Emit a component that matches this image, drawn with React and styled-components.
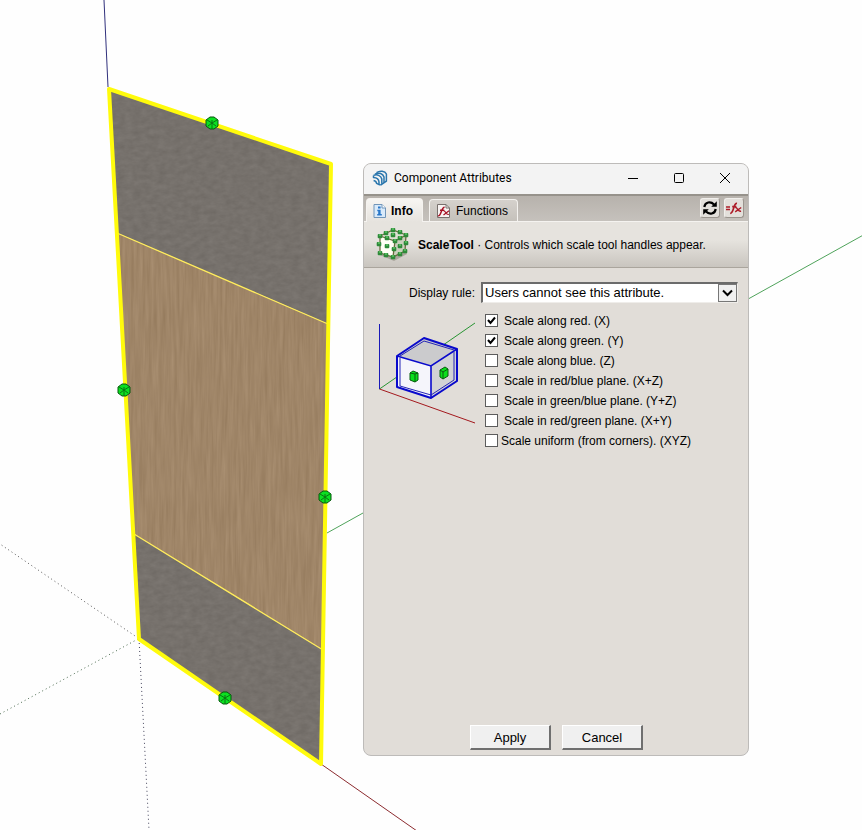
import React, { useState } from "react";
import styled, { createGlobalStyle } from "styled-components";

const GlobalStyle = createGlobalStyle`
    * {
        box-sizing: border-box;
    }

    body {
        margin: 0;
        background: #fefefe;
        color: #000;
        font-family: "Liberation Sans", Arial, sans-serif;
        font-size: 12px;
    }
`

const Desktop = styled.main`
    position: relative;
    display: flex;
    min-height: 100vh;
    padding: 163px 113px 74px 363px;
    overflow: hidden;
`

const Scene = styled.svg`
    position: absolute;
    inset: 0;
    width: 100%;
    height: 100%;
`

const Dialog = styled.section`
    position: relative;
    flex: 1;
    display: flex;
    flex-direction: column;
    min-width: 0;
    border: 1px solid #bdbbb9;
    border-radius: 8px;
    overflow: hidden;
    background: #e1ddd8;
`

const TitleBar = styled.header`
    display: flex;
    align-items: center;
    height: 30px;
    padding: 0 8px 2px;
    gap: 6px;
    background: #f3f3f3;

    h1 {
        flex: 1;
        margin: 0;
        font: 400 12px/16px Roboto, "Open Sans", sans-serif;
    }
`

const WindowButtons = styled.div`
    display: flex;
    gap: 30px;
    padding-right: 7px;
`

const WindowButton = styled.button`
    display: flex;
    width: 16px;
    height: 16px;
    padding: 0;
    border: none;
    background: none;
`

const TabBar = styled.nav`
    display: flex;
    align-items: flex-end;
    height: 28px;
    padding: 0 4px 0 2px;
    border-top: 2px solid #96928b;
    background: linear-gradient(#b7b2ac, #c6c2bd);
    box-shadow: inset 0 -1px 0 #f5f3f0;
`

const Tab = styled.button`
    display: flex;
    align-items: center;
    gap: 5px;
    height: ${(props) => (props.$active ? "24px" : "23px")};
    margin-right: 6px;
    padding: 0 9px 0 6px;
    border: 1px solid #f4f2ef;
    border-bottom: ${(props) => (props.$active ? "none" : "1px solid #f5f3f0")};
    border-radius: 4px 4px 0 0;
    background: ${(props) => (props.$active ? "linear-gradient(#f7f5f2, #e6e3de)" : "linear-gradient(#d5d1cc, #c5c1bb)")};
    color: #000;
    font: ${(props) => (props.$active ? "700" : "400")} 12px/14px "Liberation Sans", Arial, sans-serif;
`

const Tools = styled.div`
    display: flex;
    gap: 4px;
    margin-left: auto;
    padding-bottom: 4px;
`

const ToolButton = styled.button`
    display: flex;
    align-items: center;
    justify-content: center;
    width: 20px;
    height: 20px;
    padding: 0;
    border: 1px solid #f1efec;
    border-right-color: #9a958e;
    border-bottom-color: #9a958e;
    border-radius: 3px;
    background: #e3e0db;
`

const Banner = styled.div`
    display: flex;
    align-items: center;
    gap: 8px;
    height: 46px;
    padding: 0 10px 0 12px;
    border-bottom: 1px solid #aaa59d;
    background: linear-gradient(#e6e3de 40%, #c9c5bf);

    p {
        margin: 0;
        white-space: nowrap;
        line-height: 16px;
    }
`

const Form = styled.form`
    flex: 1;
    display: flex;
    flex-direction: column;
    padding: 14px 10px 5px 15px;
`

const RuleRow = styled.div`
    display: flex;
    align-items: center;
    gap: 6px;

    label {
        width: 96px;
        text-align: right;
    }
`

const SelectBox = styled.div`
    flex: 1;
    display: grid;
    border-top: 2px solid #6b6b6b;
    border-left: 2px solid #6b6b6b;
    border-bottom: 1px solid #efedea;
    border-right: 1px solid #efedea;
    background: #fff;

    select,
    svg {
        grid-area: 1 / 1;
    }

    select {
        appearance: none;
        width: 100%;
        height: 18px;
        padding: 0 20px 0 2px;
        border: none;
        border-radius: 0;
        background: none;
        color: #000;
        font: 13px/18px "Liberation Sans", Arial, sans-serif;
    }

    svg {
        justify-self: end;
        pointer-events: none;
    }
`

const Options = styled.div`
    display: flex;
    align-items: flex-start;
    gap: 10px;
    margin-top: 8px;

    > svg {
        margin: 8px 0 0;
    }
`

const OptionList = styled.ul`
    display: flex;
    flex-direction: column;
    margin: 0;
    padding: 0;
    list-style: none;
`

const Option = styled.label`
    display: flex;
    align-items: center;
    gap: ${(props) => (props.$tight ? "3px" : "6px")};
    height: 20px;
    line-height: 20px;
    white-space: nowrap;
`

const Tick = styled.span`
    display: grid;
    margin-bottom: 2px;

    input,
    svg {
        grid-area: 1 / 1;
        width: 13px;
        height: 13px;
        margin: 0;
    }

    input {
        appearance: none;
        border: 1px solid #5c5c5c;
        background: #fff;
    }

    svg {
        visibility: hidden;
        pointer-events: none;
    }

    input:checked + svg {
        visibility: visible;
    }
`

const Footer = styled.footer`
    display: flex;
    justify-content: center;
    gap: 11px;
    margin-top: auto;
    padding-right: 4px;
`

const PushButton = styled.button`
    width: 81px;
    height: 25px;
    padding: 1px 0 0;
    border: 1px solid #fff;
    border-right: 2px solid #6f6f6f;
    border-bottom: 2px solid #6f6f6f;
    background: #f0f0f0;
    color: #000;
    font: 13px/16px "Liberation Sans", Arial, sans-serif;
`

const handles = [
    [212, 123],
    [124, 390],
    [325, 497],
    [225, 698],
]

const options = [
    { id: "x", text: "Scale along red. (X)", on: true },
    { id: "y", text: "Scale along green. (Y)", on: true },
    { id: "z", text: "Scale along blue. (Z)" },
    { id: "xz", text: "Scale in red/blue plane. (X+Z)" },
    { id: "yz", text: "Scale in green/blue plane. (Y+Z)" },
    { id: "xy", text: "Scale in red/green plane. (X+Y)" },
    { id: "xyz", text: "Scale uniform (from corners). (XYZ)", tight: true },
]

function Handle({ x, y }) {
    return (
        <g transform={`translate(${x} ${y})`}>
            <path d="M-6 -3L-2 -6H2L6 -3V3L2 6H-2L-6 3Z" fill="#0be021" stroke="#06570c" strokeLinejoin="round" />
            <path d="M-5 -3L0 0L5 -3M0 0V6M-4 3L0 0L4 3M0 -3V0" fill="none" stroke="#087512" />
        </g>
    )
}

function Model() {
    return (
        <Scene aria-hidden="true">
            <defs>
                <filter id="stone" x="0" y="0" width="100%" height="100%" colorInterpolationFilters="sRGB">
                    <feTurbulence type="fractalNoise" baseFrequency="0.12 0.2" numOctaves="3" seed="4" />
                    <feColorMatrix values="0.07 0 0 0 0.428  0.07 0 0 0 0.408  0.07 0 0 0 0.388  0 0 0 0 1" />
                    <feComposite in2="SourceGraphic" operator="in" />
                </filter>
                <filter id="wood" x="0" y="0" width="100%" height="100%" colorInterpolationFilters="sRGB">
                    <feTurbulence type="fractalNoise" baseFrequency="0.35 0.02" numOctaves="3" seed="8" />
                    <feColorMatrix values="0.09 0 0 0 0.58  0.09 0 0 0 0.478  0.09 0 0 0 0.362  0 0 0 0 1" />
                    <feComposite in2="SourceGraphic" operator="in" />
                </filter>
            </defs>
            <path d="M104 0L108 87" stroke="#30307c" />
            <path d="M327 533L1398 -62" stroke="#4fa35b" />
            <path d="M321 764L609 965" stroke="#8c2b2f" />
            <path d="M138 638L0 544" stroke="#555" strokeDasharray="1 3" />
            <path d="M138 639L0 714" stroke="#4b6b4f" strokeDasharray="1 3" />
            <path d="M139 639L149 830" stroke="#45455c" strokeDasharray="1 3" />
            <path d="M109 89L331 164L328 324L117 233Z" fill="#77716c" filter="url(#stone)" />
            <path d="M117 233L328 324L323 650L134 534Z" fill="#a08565" filter="url(#wood)" />
            <path d="M134 534L323 650L321 764L139 639Z" fill="#77716c" filter="url(#stone)" />
            <path d="M117 233L328 324M134 534L323 650" stroke="#ffec5a" strokeWidth="1.3" />
            <path d="M109 89L331 164L321 764L139 639Z" fill="none" stroke="#fffb0c" strokeWidth="4" strokeLinejoin="round" />
            {handles.map(([x, y]) => (
                <Handle key={y} x={x} y={y} />
            ))}
        </Scene>
    )
}

function AppLogo() {
    return (
        <svg width="16" height="16" viewBox="0 0 16 16" fill="none" stroke="#2a76ad" strokeWidth="1.5" strokeLinejoin="round">
            <path d="M4.5 2.6C8 .3 13 1 14.4 4V11.2L8.6 15" />
            <path d="M3 4.2C7 2 11 3.6 12 7V12.4" />
            <path d="M1.5 5.4C5 4 9 5.4 9.8 9V13.8" />
            <path d="M1.5 5.4V7.6C4.6 7.8 6.8 9.2 7 12V14.6L8.6 15M1.6 10.4C3.4 10.8 4.4 11.6 4.6 13.4L7 14.6" />
        </svg>
    )
}

function InfoIcon() {
    return (
        <svg width="13" height="14" viewBox="0 0 13 14">
            <path d="M1 .5H9L12.5 4V13.5H1Z" fill="#d9eafa" stroke="#7195b8" />
            <path d="M9 .5V4H12.5" fill="#fff" stroke="#7195b8" />
            <path d="M5 2.5H7.6V4.5H5ZM4.3 5.8H7.6V10H8.8V11.5H4.2V10H5.2V7.2H4.3Z" fill="#2877c9" />
        </svg>
    )
}

function FxIcon() {
    return (
        <svg width="15" height="14" viewBox="0 0 15 14" fill="none">
            <path d="M1.5 .5H10L13.5 4V13.5H1.5Z" fill="#f8f3f2" stroke="#77706d" />
            <path d="M10 .5V4H13.5" stroke="#77706d" />
            <path d="M2 11.8C5.5 12.5 5 3 8.6 3.2M4 6.2H8.2" stroke="#a50f22" strokeWidth="1.4" />
            <path d="M7.5 7C9.5 6 10 11.5 12.8 10.4M13 6.8L7.5 11" stroke="#a50f22" strokeWidth="1.2" />
        </svg>
    )
}

function RefreshIcon() {
    return (
        <svg width="16" height="16" viewBox="0 0 16 16" fill="none">
            <path d="M2.3 7C3 1.8 8.7 1 12 4.4M13.7 9C13 14.2 7.3 15 4 11.6" stroke="#000" strokeWidth="2.2" />
            <path d="M14.8 1.2V6.8H9.2ZM1.2 14.8V9.2H6.8Z" fill="#000" />
        </svg>
    )
}

function FormulaIcon() {
    return (
        <svg width="16" height="14" viewBox="0 0 16 14" fill="none" stroke="#ad1d29">
            <path d="M0 6H4M0 8.5H4" strokeWidth="1.4" />
            <path d="M4.2 12.3C8 12.5 7.2 1.8 11 2.4M6.2 5.6H10.4" strokeWidth="1.7" />
            <path d="M9.2 6.6C11.5 5.5 11.6 11.5 15 10M15.2 6.5L9.2 10.8" strokeWidth="1.5" />
        </svg>
    )
}

function ScaleIcon() {
    const dots = [
        [4, 8], [10, 5], [17, 2], [24, 4], [30, 7], [24, 10], [19, 13], [11, 10],
        [3, 16], [4, 25], [10, 27], [17, 29], [24, 26], [29, 23], [30, 15], [18, 21],
        [11, 18], [24, 18], [17, 7],
    ]
    return (
        <svg width="34" height="34" viewBox="0 0 34 34">
            <path d="M4 27L18 33L31 26L29 22Z" fill="#aaa69d" />
            <path d="M4 8L19 13L17 29L4 25Z" fill="#fffff5" />
            <path d="M4 8L17 2L30 7L19 13Z" fill="#dedfd3" />
            <path d="M19 13L30 7L29 23L17 29Z" fill="#cbd0bd" />
            <path d="M4 8L17 2L30 7L19 13ZM4 8V25L17 29L29 23L30 7M19 13L17 29" fill="none" stroke="#676c3e" strokeWidth="1.3" />
            {dots.map(([x, y]) => (
                <g key={`${x}-${y}`}>
                    <rect x={x - 2.3} y={y - 2} width="4.6" height="4.2" rx="1" fill="#2f8a3a" />
                    <rect x={x - 1} y={y - 2} width="2" height="2" fill="#50b759" />
                </g>
            ))}
        </svg>
    )
}

function AxesDiagram() {
    return (
        <svg width="96" height="106" viewBox="1 0 96 106" fill="none">
            <path d="M1.5 70L97 4" stroke="#289432" />
            <path d="M1.5 70L97 104" stroke="#a3181d" />
            <path d="M1.5 5V70" stroke="#1a1ab8" />
            <path d="M19 37L46 19L79 30L53 47Z" fill="#cbcbcd" />
            <path d="M19 37L53 47V79L19 68Z" fill="#f5f5fb" />
            <path d="M53 47L79 30V62L53 79Z" fill="#d2d2d5" />
            <path d="M19 37L46 19L79 30V62L53 79L19 68Z" stroke="#0909cc" strokeWidth="2" strokeLinejoin="round" />
            <path d="M19 37L53 47L79 30M53 47V79" stroke="#0909cc" strokeWidth="1.6" />
            <path d="M22 39V67L53 76L76 61V33M22 37L46 22L76 31" stroke="#2424b5" />
            <path d="M32 54L35 52L40 54V61L37 63L32 61Z" fill="#08df1b" stroke="#075c0d" />
            <path d="M32 54L37 55L40 54M37 55V63" stroke="#075c0d" />
            <path d="M62 51L67 48L70 50V57L65 60L62 58Z" fill="#08df1b" stroke="#075c0d" />
            <path d="M62 51L65 53L70 50M65 53V60" stroke="#075c0d" />
        </svg>
    )
}

function ScaleOption({ option }) {
    const [checked, setChecked] = useState(Boolean(option.on))
    return (
        <li>
            <Option htmlFor={option.id} $tight={option.tight}>
                <Tick>
                    <input id={option.id} type="checkbox" checked={checked} onChange={() => setChecked(!checked)} />
                    <svg viewBox="0 0 13 13" fill="none" stroke="#000" strokeWidth="2">
                        <path d="M3 6L5.5 9L10 3.5" />
                    </svg>
                </Tick>
                {option.text}
            </Option>
        </li>
    )
}

export default function App() {
    return (
        <Desktop>
            <GlobalStyle />
            <Model />
            <Dialog>
                <TitleBar>
                    <AppLogo />
                    <h1>Component Attributes</h1>
                    <WindowButtons>
                        <WindowButton aria-label="Minimize">
                            <svg width="16" height="16" stroke="#000"><path d="M3 8.5H13" /></svg>
                        </WindowButton>
                        <WindowButton aria-label="Maximize">
                            <svg width="16" height="16" fill="none" stroke="#000"><rect x="3.5" y="3.5" width="9" height="9" rx="1" /></svg>
                        </WindowButton>
                        <WindowButton aria-label="Close">
                            <svg width="16" height="16" stroke="#000"><path d="M3 3L13 13M13 3L3 13" /></svg>
                        </WindowButton>
                    </WindowButtons>
                </TitleBar>
                <TabBar>
                    <Tab $active><InfoIcon />Info</Tab>
                    <Tab><FxIcon />Functions</Tab>
                    <Tools>
                        <ToolButton aria-label="Refresh"><RefreshIcon /></ToolButton>
                        <ToolButton aria-label="Toggle formula view"><FormulaIcon /></ToolButton>
                    </Tools>
                </TabBar>
                <Banner>
                    <ScaleIcon />
                    <p><b>ScaleTool</b> · Controls which scale tool handles appear.</p>
                </Banner>
                <Form onSubmit={(e) => e.preventDefault()}>
                    <RuleRow>
                        <label htmlFor="rule">Display rule:</label>
                        <SelectBox>
                            <select id="rule">
                                <option>Users cannot see this attribute.</option>
                            </select>
                            <svg width="19" height="18" fill="none">
                                <rect x=".5" y=".5" width="18" height="17" fill="#f0f0f0" stroke="#777" />
                                <path d="M5 6.5L9.5 11L14 6.5" stroke="#000" strokeWidth="2" />
                            </svg>
                        </SelectBox>
                    </RuleRow>
                    <Options>
                        <AxesDiagram />
                        <OptionList>
                            {options.map((option) => (
                                <ScaleOption key={option.id} option={option} />
                            ))}
                        </OptionList>
                    </Options>
                    <Footer>
                        <PushButton type="submit">Apply</PushButton>
                        <PushButton type="button">Cancel</PushButton>
                    </Footer>
                </Form>
            </Dialog>
        </Desktop>
    )
}
